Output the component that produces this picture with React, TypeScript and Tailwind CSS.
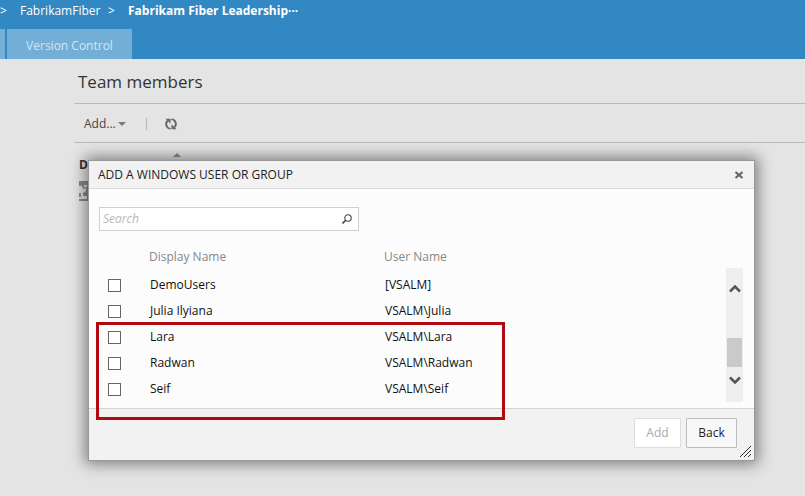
const users = [
  { name: "DemoUsers", account: "[VSALM]" },
  { name: "Julia Ilyiana", account: "VSALM\\Julia" },
  { name: "Lara", account: "VSALM\\Lara" },
  { name: "Radwan", account: "VSALM\\Radwan" },
  { name: "Seif", account: "VSALM\\Seif" },
];

function Header() {
  return (
    <header className="bg-[#3288c2] text-white">
      <nav aria-label="Breadcrumb" className="flex h-[29px] items-start text-xs leading-[22px]">
        <span className="w-5">&gt;</span>
        <a href="#project" className="w-[88px]">FabrikamFiber</a>
        <span className="w-5">&gt;</span>
        <a href="#team" className="font-bold whitespace-nowrap">Fabrikam Fiber Leadership···</a>
      </nav>
      <div className="flex h-[30px] gap-0.5">
        <span className="w-[5px] bg-[#73aed6]" />
        <a href="#version-control" className="flex w-[125px] items-center justify-center bg-[#73aed6] pt-1 text-xs text-[#d3e6f3]">
          Version Control
        </a>
      </div>
    </header>
  );
}

function Toolbar() {
  return (
    <div className="flex h-10 items-center border-y border-[#bababa] pl-2.5 pt-0.5 text-xs text-[#444]">
      <button type="button" className="flex items-center gap-0.5">
        Add...
        <svg width="8" height="4" viewBox="0 0 8 4" aria-hidden="true">
          <path d="M0 0h8L4 4z" fill="#777" />
        </svg>
      </button>
      <span className="ml-5 h-3 w-px bg-[#b4b4b4]" />
      <button type="button" aria-label="Refresh" className="ml-[18px]">
        <svg width="12" height="12" viewBox="0 0 12 12" fill="none" stroke="#666" strokeWidth="2" aria-hidden="true">
          <path d="M3.500 10.200A4.600 4.600 0 0 1 2.600 2.800" />
          <path d="M8.500 1.800A4.600 4.600 0 0 1 9.400 9.200" />
          <path d="M0.500 0.800H5.500V5.800z" fill="#666" stroke="none" />
          <path d="M11.500 11.200H6.500V6.200z" fill="#666" stroke="none" />
          <path d="M6.300 1.500h2.500M3.200 10.500h2.500" strokeWidth="1.600" />
        </svg>
      </button>
    </div>
  );
}

function ScrollBar() {
  return (
    <div className="flex w-[17px] flex-col items-center bg-[#efefef] pt-4 pb-[17px]" aria-hidden="true">
      <svg width="12" height="9" viewBox="0 0 12 9" fill="none" stroke="#555" strokeWidth="2.500">
        <path d="M1 7.500 6 2.500l5 5" />
      </svg>
      <span className="mt-[45px] h-[29px] w-[15px] bg-[#cacaca]" />
      <svg className="mt-auto" width="12" height="9" viewBox="0 0 12 9" fill="none" stroke="#555" strokeWidth="2.500">
        <path d="M1 1.500l5 5 5-5" />
      </svg>
    </div>
  );
}

function UserTable() {
  return (
    <table className="flex-1 table-fixed text-left text-xs">
      <colgroup>
        <col className="w-[50px]" />
        <col className="w-[235px]" />
        <col />
      </colgroup>
      <thead>
        <tr className="h-[30px] text-[#888]">
          <td />
          <th scope="col" className="font-normal">Display Name</th>
          <th scope="col" className="font-normal">User Name</th>
        </tr>
      </thead>
      <tbody className="text-[#111]">
        {users.map((user) => (
          <tr key={user.name} className="h-[26px]">
            <td className="pl-[9px]">
              <input
                type="checkbox"
                aria-label={user.name}
                className="block size-[13px] appearance-none border border-[#666] bg-white checked:bg-[#3288c2]"
              />
            </td>
            <td className="pl-px">{user.name}</td>
            <td className="pl-px">{user.account}</td>
          </tr>
        ))}
      </tbody>
    </table>
  );
}

function AddUserDialog() {
  return (
    <div
      role="dialog"
      aria-labelledby="dialog-title"
      className="absolute top-40 right-[50px] left-[88px] border border-[#999] bg-[#fcfcfc] shadow-[0_0_14px_3px_rgba(0,0,0,0.45)]"
    >
      <div className="flex h-7 items-center justify-between border-b border-[#dadada] bg-[#f2f2f2] pr-[11px] pl-[9px]">
        <h2 id="dialog-title" className="text-xs text-[#222]">ADD A WINDOWS USER OR GROUP</h2>
        <button type="button" aria-label="Close">
          <svg width="8" height="8" viewBox="0 0 8 8" stroke="#666" strokeWidth="2" aria-hidden="true">
            <path d="M0.500 1l7 6M7.500 1l-7 6" />
          </svg>
        </button>
      </div>

      <div className="pt-[18px] pr-[11px] pb-1.5 pl-2.5">
        <div className="flex h-6 w-[260px] items-center border border-[#cfcfcf] bg-white pr-1.5 pl-[3px]">
          <input
            type="text"
            aria-label="Search"
            placeholder="Search"
            className="min-w-0 flex-1 text-xs placeholder:text-[#b8b8b8] placeholder:italic focus:outline-none"
          />
          <button type="button" aria-label="Run search">
            <svg width="10" height="10" viewBox="0 0 10 10" fill="none" stroke="#444" aria-hidden="true">
              <circle cx="6" cy="4" r="3.200" strokeWidth="1.100" />
              <path d="M3.700 6.300.5 9.500" strokeWidth="1.600" />
            </svg>
          </button>
        </div>
        <div className="flex items-start pt-[11px]">
          <UserTable />
          <div className="flex self-stretch pt-[26px]">
            <ScrollBar />
          </div>
        </div>
      </div>

      <div className="relative flex justify-end gap-[5px] border-t border-[#d4d4d4] bg-[#f2f2f2] pt-[9px] pr-[17px] pb-3 text-xs">
        <button type="button" disabled className="h-[30px] w-[47px] rounded-[1px] border border-[#dedede] bg-white text-[#aaa]">
          Add
        </button>
        <button type="button" className="h-[30px] w-[51px] rounded-[1px] border border-[#bcbcbc] bg-[#f8f8f8] text-[#222]">
          Back
        </button>
        <svg className="absolute right-[3px] bottom-[3px]" width="11" height="11" viewBox="0 0 11 11" stroke="#333" aria-hidden="true">
          <path d="M0 11 11 0M4 11l7-7M8 11l3-3" />
        </svg>
      </div>

      <div className="pointer-events-none absolute top-[161px] left-[7px] h-[98px] w-[409px] border-[3px] border-[#b00a10]" />
    </div>
  );
}

export default function App() {
  return (
    <div className="relative min-h-screen overflow-hidden bg-[#e4e4e4] font-['Open_Sans','Noto_Sans',sans-serif]">
      <Header />
      <main className="pl-[74px]">
        <h1 className="h-11 pl-1 text-[17px] leading-[46px] text-[#333]">Team members</h1>
        <Toolbar />
        <div className="flex items-start pt-2.5 pl-[5px]">
          <div className="w-[94px] text-xs font-bold text-[#333]">
            <div className="h-6 leading-6">D</div>
            <svg className="mt-1" width="20" height="20" viewBox="0 0 20 20" aria-hidden="true">
              <path d="M0 0h20v20H0z" fill="#8c8c8c" />
              <path d="M0 5h3l1 3 3-1v3l-3 2v3h4v3H0v-2h2v-4H0zM5 4h3v2H5z" fill="#dedede" />
            </svg>
          </div>
          <svg width="8" height="4" viewBox="0 0 8 4" aria-hidden="true">
            <path d="M0 4h8L4 0z" fill="#888" />
          </svg>
        </div>
      </main>
      <AddUserDialog />
    </div>
  );
}
